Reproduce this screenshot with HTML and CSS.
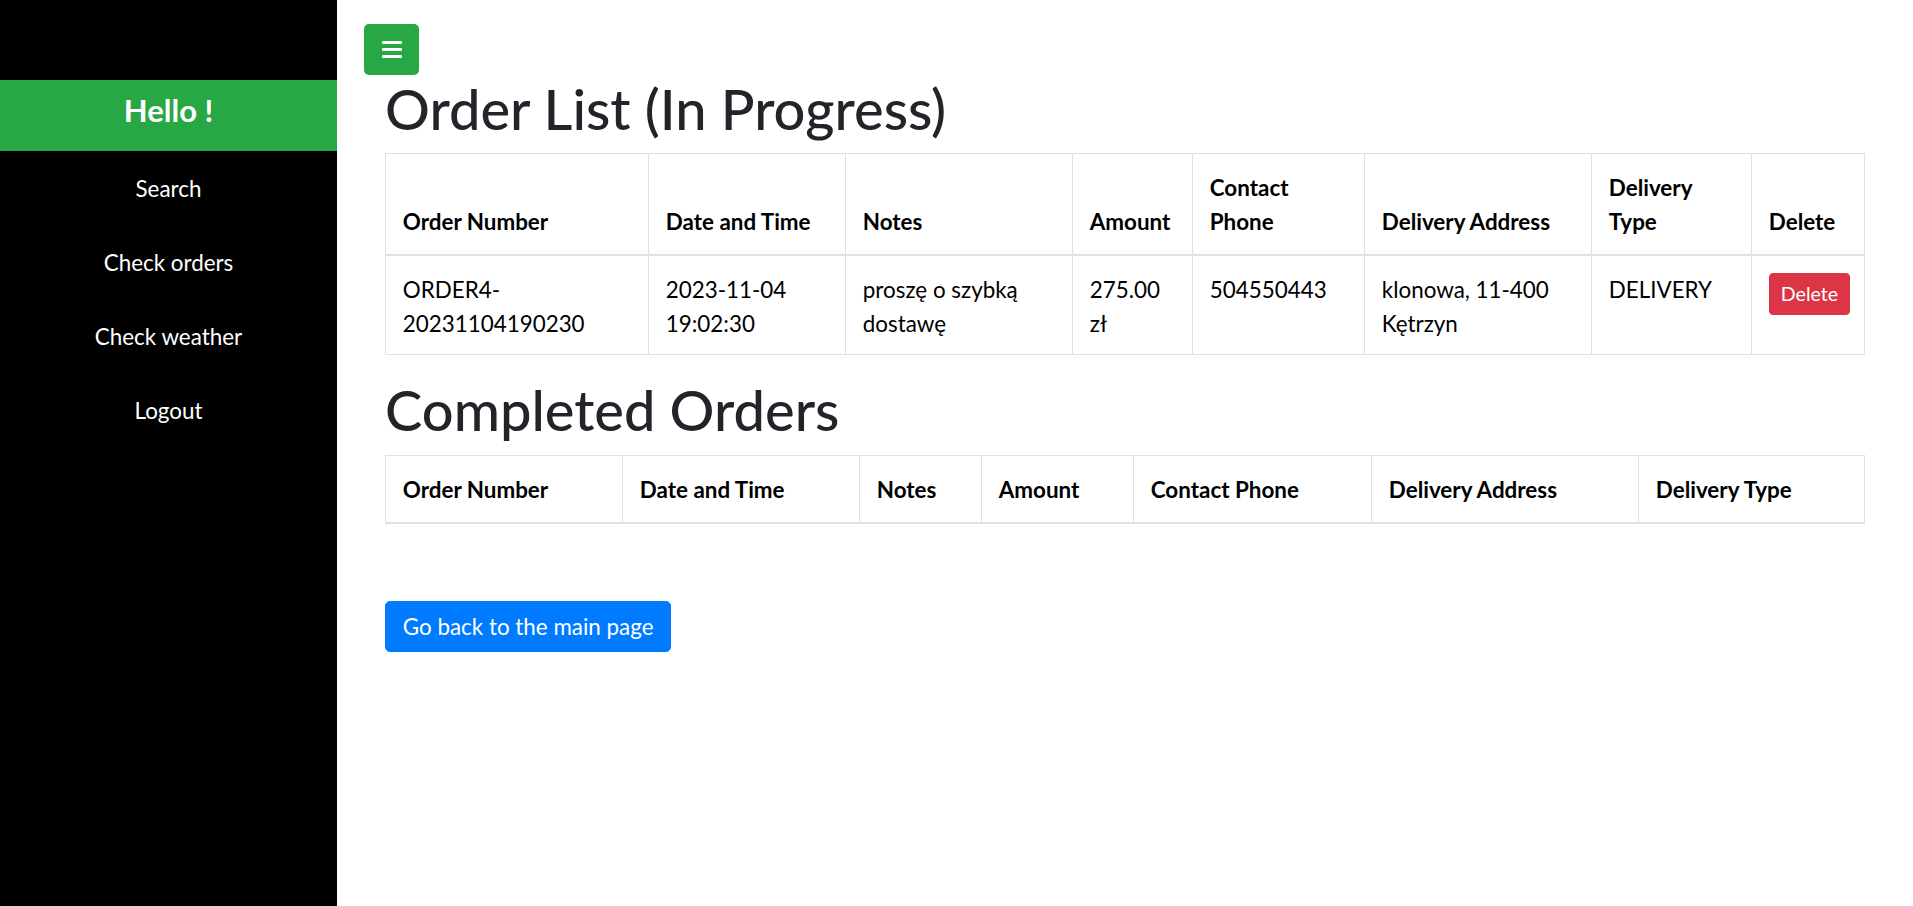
FILE: index.html
```html
<!DOCTYPE html>
<html lang="en">
<head>
<meta charset="utf-8">
<title>Order List</title>
<link rel="stylesheet" href="styles.css">
</head>
<body>
<div class="layout">
  <aside class="sidebar">
    <div class="hello">Hello !</div>
    <nav class="nav">
      <a class="nav-link" href="#">Search</a>
      <a class="nav-link" href="#">Check orders</a>
      <a class="nav-link" href="#">Check weather</a>
      <a class="nav-link" href="#">Logout</a>
    </nav>
  </aside>
  <main class="main">
    <button class="toggle" type="button" aria-label="Menu">
      <svg width="20" height="17" viewBox="0 0 20 17"><rect x="0" y="0" width="20" height="3" rx="1" fill="#fff"/><rect x="0" y="7" width="20" height="3" rx="1" fill="#fff"/><rect x="0" y="14" width="20" height="3" rx="1" fill="#fff"/></svg>
    </button>
    <div class="content">
      <h1 class="title">Order List (In Progress)</h1>
      <table class="table table-progress">
        <thead>
          <tr>
            <th>Order Number</th>
            <th>Date and Time</th>
            <th>Notes</th>
            <th>Amount</th>
            <th>Contact Phone</th>
            <th>Delivery Address</th>
            <th>Delivery Type</th>
            <th>Delete</th>
          </tr>
        </thead>
        <tbody>
          <tr>
            <td>ORDER4-<br>20231104190230</td>
            <td>2023-11-04<br>19:02:30</td>
            <td>proszę o szybką dostawę</td>
            <td>275.00<br>zł</td>
            <td>504550443</td>
            <td>klonowa, 11-400 Kętrzyn</td>
            <td>DELIVERY</td>
            <td><button class="btn-delete" type="button">Delete</button></td>
          </tr>
        </tbody>
      </table>
      <h1 class="title">Completed Orders</h1>
      <table class="table table-done">
        <thead>
          <tr>
            <th>Order Number</th>
            <th>Date and Time</th>
            <th>Notes</th>
            <th>Amount</th>
            <th>Contact Phone</th>
            <th>Delivery Address</th>
            <th>Delivery Type</th>
          </tr>
        </thead>
        <tbody></tbody>
      </table>
      <a class="btn-back" href="#">Go back to the main page</a>
    </div>
  </main>
</div>
</body>
</html>
```

FILE: styles.css
```css
* {
  box-sizing: border-box;
}

html, body {
  margin: 0;
  padding: 0;
}

body {
  font-family: Lato, "Open Sans", "Noto Sans", sans-serif;
  font-size: 22.4px;
  line-height: 1.5;
  color: #212529;
  background: #fff;
}

.layout {
  display: flex;
  min-height: 906px;
}

.sidebar {
  width: 337px;
  flex: 0 0 337px;
  background: #000;
  padding-top: 80px;
}

.hello {
  background: #28a745;
  color: #fff;
  font-weight: 700;
  font-size: 31px;
  line-height: 37px;
  height: 71px;
  padding: 12px 0 22px;
  text-align: center;
}

.nav {
  display: flex;
  flex-direction: column;
}

.nav-link {
  display: block;
  color: #fff;
  text-decoration: none;
  text-align: center;
  padding: 20.5px 0 20px;
  line-height: 33.6px;
}

.main {
  flex: 1;
  padding: 24px 49px 0 0;
}

.toggle {
  display: flex;
  align-items: center;
  justify-content: center;
  width: 55px;
  height: 51px;
  margin-left: 27px;
  padding: 0;
  border: 0;
  border-radius: 5px;
  background: #28a745;
}

.content {
  padding-left: 48px;
}

.title {
  font-size: 56px;
  font-weight: 500;
  line-height: 1.2;
  margin: 0 0 11.2px;
  color: #212529;
}

.table {
  width: 100%;
  border-collapse: collapse;
  table-layout: fixed;
  margin-bottom: 21px;
  color: #000;
}

.table th,
.table td {
  border: 1px solid #dee2e6;
  padding: 16.8px 16.8px;
  text-align: left;
  line-height: 33.6px;
}

.table th {
  font-weight: 700;
  vertical-align: bottom;
  border-bottom: 2px solid #dee2e6;
  padding-bottom: 16px;
}

.table td {
  vertical-align: top;
  padding-bottom: 14px;
}

.table-progress th:nth-child(1) { width: 263px; }
.table-progress th:nth-child(2) { width: 197px; }
.table-progress th:nth-child(3) { width: 227px; }
.table-progress th:nth-child(4) { width: 120px; }
.table-progress th:nth-child(5) { width: 172px; }
.table-progress th:nth-child(6) { width: 227px; }
.table-progress th:nth-child(7) { width: 160px; }
.table-progress th:nth-child(8) { width: 113px; }

.table-done th:nth-child(1) { width: 237px; }
.table-done th:nth-child(2) { width: 237px; }
.table-done th:nth-child(3) { width: 122px; }
.table-done th:nth-child(4) { width: 152px; }
.table-done th:nth-child(5) { width: 238px; }
.table-done th:nth-child(6) { width: 267px; }
.table-done th:nth-child(7) { width: 226px; }

.btn-delete {
  display: inline-block;
  vertical-align: top;
  font-family: inherit;
  font-size: 19.6px;
  line-height: 29.4px;
  color: #fff;
  background: #dc3545;
  border: 1px solid #dc3545;
  border-radius: 4px;
  padding: 5px 11px;
  margin: 0;
  cursor: pointer;
}

.btn-back {
  display: inline-block;
  margin-top: 56px;
  color: #fff;
  background: #007bff;
  border: 1px solid #007bff;
  border-radius: 5px;
  padding: 7.5px 16.8px;
  line-height: 33.6px;
  text-decoration: none;
}
```
